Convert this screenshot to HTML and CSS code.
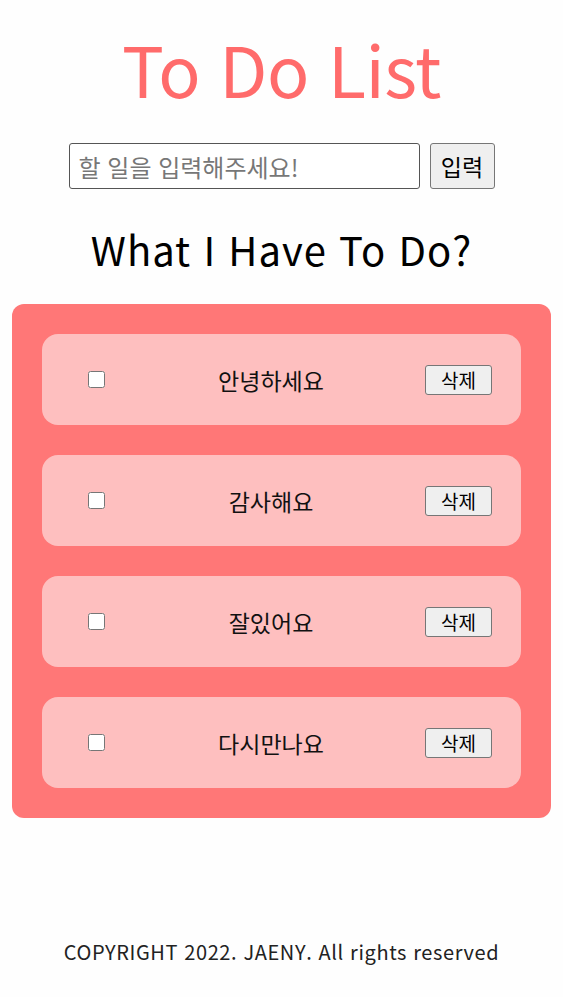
FILE: index.html
```html
<!DOCTYPE html>
<html lang="ko">
<head>
<meta charset="utf-8">
<title>To Do List</title>
<link rel="stylesheet" href="styles.css">
</head>
<body>
<header class="header">
  <h1 class="title">To Do List</h1>
</header>
<form class="add-form">
  <input class="add-input" type="text" placeholder="할 일을 입력해주세요!">
  <button class="add-btn" type="button">입력</button>
</form>
<h2 class="subtitle">What I Have To Do?</h2>
<main class="board">
  <ul class="todo-list">
    <li class="todo-item"><input class="todo-check" type="checkbox"><span class="todo-text">안녕하세요</span><button class="del-btn" type="button">삭제</button></li>
    <li class="todo-item"><input class="todo-check" type="checkbox"><span class="todo-text">감사해요</span><button class="del-btn" type="button">삭제</button></li>
    <li class="todo-item"><input class="todo-check" type="checkbox"><span class="todo-text">잘있어요</span><button class="del-btn" type="button">삭제</button></li>
    <li class="todo-item"><input class="todo-check" type="checkbox"><span class="todo-text">다시만나요</span><button class="del-btn" type="button">삭제</button></li>
  </ul>
</main>
<footer class="footer">COPYRIGHT 2022. JAENY. All rights reserved</footer>
</body>
</html>
```
FILE: styles.css
```css
* { box-sizing: border-box; }
html, body { margin: 0; padding: 0; background: #fefefe; }
body {
  font-family: "Noto Sans CJK KR", "Noto Sans", sans-serif;
  color: #111;
  width: 563px;
}
.header { height: 136px; display: flex; align-items: center; justify-content: center; }
.title {
  margin: 0;
  font-size: 70px;
  font-weight: 400;
  color: #ff6b6b;
  line-height: 1;
  letter-spacing: -0.5px;
}
.add-form {
  display: flex;
  justify-content: center;
  gap: 10px;
  margin-top: 7px;
  height: 46px;
}
.add-input {
  width: 351px;
  height: 46px;
  border: 1px solid #555;
  border-radius: 3px;
  padding: 0 9px;
  font-family: inherit;
  font-size: 24px;
  background: #fff;
}
.add-input::placeholder { color: #777; }
.add-btn {
  width: 65px;
  height: 46px;
  border: 1px solid #767676;
  border-radius: 3px;
  background: #efefef;
  font-family: inherit;
  font-size: 23px;
  padding: 0;
  color: #000;
}
.subtitle {
  margin: 0;
  height: 115px;
  display: flex;
  align-items: center;
  justify-content: center;
  font-size: 40px;
  font-weight: 400;
  color: #000;
  letter-spacing: 1px;
  padding-top: 4px;
}
.board {
  margin: 0 12px;
  background: #ff7777;
  border-radius: 12px;
  padding: 30px;
}
.todo-list {
  list-style: none;
  margin: 0;
  padding: 0;
  display: flex;
  flex-direction: column;
  gap: 30px;
}
.todo-item {
  height: 91px;
  background: #febfbf;
  border-radius: 16px;
  display: flex;
  align-items: center;
  padding: 0 29px 0 46px;
}
.todo-check {
  width: 17px;
  height: 17px;
  margin: 0;
  flex: none;
}
.todo-text {
  flex: 1;
  text-align: center;
  font-size: 23px;
  color: #111;
  padding-left: 12px;
}
.del-btn {
  width: 67px;
  height: 30px;
  border: 1px solid #767676;
  border-radius: 3px;
  background: #efefef;
  font-family: inherit;
  font-size: 19px;
  padding: 0;
  color: #000;
  line-height: 1;
}
.footer {
  margin-top: 119px;
  text-align: center;
  font-size: 20px;
  letter-spacing: 0.6px;
  color: #222;
}
```
